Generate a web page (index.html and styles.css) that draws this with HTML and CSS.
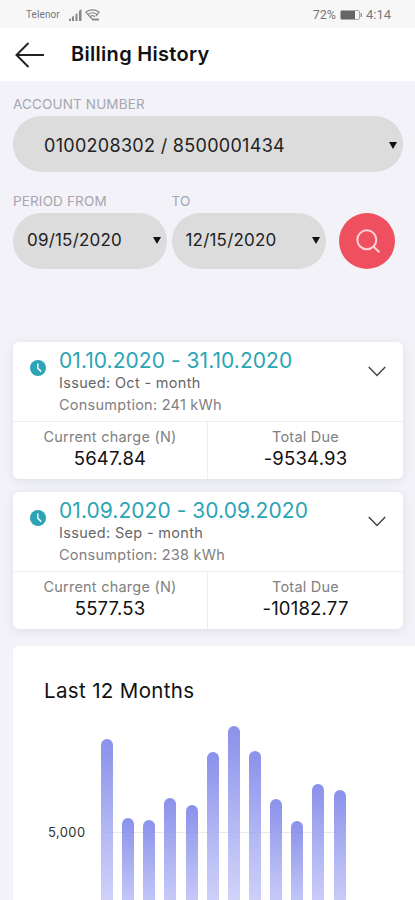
FILE: index.html
```html
<!DOCTYPE html>
<html lang="en">

<head>
    <meta charset="UTF-8">
    <meta name="viewport" content="width=device-width, initial-scale=1.0">
    <title>Billing History</title>
    <link rel="stylesheet" href="styles.css">
</head>

<body>

    <div class="status-bar">
        <span class="carrier">Telenor</span>
        <svg class="signal" width="13" height="12" viewBox="0 0 13 12">
            <path d="M0 12V10.5L2 9V12zM3 12V8L5 6.5V12zM6.500 12V5.500L8.500 4V12zM10 12V2L12.500 0V12z" fill="#888" />
        </svg>
        <svg class="wifi" width="15" height="12" viewBox="0 0 15 12" fill="none" stroke="#888" stroke-width="1.2">
            <path d="M0.500 3.200Q7.500 -1.500 14.500 3.200M3 5.500Q7.500 2 12 5.500M5 7.800Q7.500 5.500 10 7.800M0.800 3.200L7 10M14.200 3.200L11 7" />
            <path d="M7 10.500H14" stroke-width="2" />
        </svg>
        <span class="battery-level">72%</span>
        <svg class="battery" width="22" height="10" viewBox="0 0 22 10">
            <rect x="0.500" y="0.500" width="19" height="9" rx="1.500" fill="#f7f7f7" stroke="#aaa" />
            <rect x="1" y="1" width="14" height="8" fill="#666" />
            <rect x="20.500" y="3" width="1.500" height="4" fill="#999" />
        </svg>
        <span class="clock">4:14</span>
    </div>

    <header>
        <svg class="back" width="30" height="26" viewBox="0 0 30 26" fill="none" stroke="#222" stroke-width="2">
            <path d="M13.500 1L1.500 13L13.500 25" />
            <path d="M1.500 13H29" />
        </svg>
        <h1>Billing History</h1>
    </header>

    <div class="filters">
        <div class="label">ACCOUNT NUMBER</div>
        <div class="select account">
            <span>0100208302 / 8500001434</span>
            <i class="caret"></i>
        </div>
        <div class="period">
            <div class="column">
                <div class="label">PERIOD FROM</div>
                <div class="select">
                    <span>09/15/2020</span>
                    <i class="caret"></i>
                </div>
            </div>
            <div class="column">
                <div class="label">TO</div>
                <div class="select">
                    <span>12/15/2020</span>
                    <i class="caret"></i>
                </div>
            </div>
            <button class="search" aria-label="Search">
                <svg width="24" height="24" viewBox="0 0 24 24" fill="none" stroke="#ffd3d8" stroke-width="2" stroke-linecap="round">
                    <circle cx="10.800" cy="10.800" r="9.500" />
                    <path d="M17.700 17.700L22.800 22.800" />
                </svg>
            </button>
        </div>
    </div>

    <div class="bills">
        <div class="card">
            <div class="card-top">
                <svg class="time" width="16" height="16" viewBox="0 0 16 16">
                    <circle cx="8" cy="8" r="8" fill="#2ba5b5" />
                    <path d="M7.800 3.500V8.200L11.200 11.600" fill="none" stroke="#fff" stroke-width="1.500" />
                </svg>
                <div class="info">
                    <div class="dates">01.10.2020 - 31.10.2020</div>
                    <div class="issued">Issued: Oct - month</div>
                    <div class="usage">Consumption: 241 kWh</div>
                </div>
                <svg class="chevron" width="18" height="11" viewBox="0 0 18 11" fill="none" stroke="#444" stroke-width="1.500">
                    <path d="M0.800 1L9 9.500L17.200 1" />
                </svg>
            </div>
            <div class="card-bottom">
                <div class="cell">
                    <div class="cell-label">Current charge (N)</div>
                    <div class="amount">5647.84</div>
                </div>
                <div class="cell">
                    <div class="cell-label">Total Due</div>
                    <div class="amount">-9534.93</div>
                </div>
            </div>
        </div>

        <div class="card">
            <div class="card-top">
                <svg class="time" width="16" height="16" viewBox="0 0 16 16">
                    <circle cx="8" cy="8" r="8" fill="#2ba5b5" />
                    <path d="M7.800 3.500V8.200L11.200 11.600" fill="none" stroke="#fff" stroke-width="1.500" />
                </svg>
                <div class="info">
                    <div class="dates">01.09.2020 - 30.09.2020</div>
                    <div class="issued">Issued: Sep - month</div>
                    <div class="usage">Consumption: 238 kWh</div>
                </div>
                <svg class="chevron" width="18" height="11" viewBox="0 0 18 11" fill="none" stroke="#444" stroke-width="1.500">
                    <path d="M0.800 1L9 9.500L17.200 1" />
                </svg>
            </div>
            <div class="card-bottom">
                <div class="cell">
                    <div class="cell-label">Current charge (N)</div>
                    <div class="amount">5577.53</div>
                </div>
                <div class="cell">
                    <div class="cell-label">Total Due</div>
                    <div class="amount">-10182.77</div>
                </div>
            </div>
        </div>
    </div>

    <div class="chart-card">
        <h2>Last 12 Months</h2>
        <div class="chart">
            <div class="axis">5,000</div>
            <div class="plot">
                <div class="bar" style="height: 221px"></div>
                <div class="bar" style="height: 142px"></div>
                <div class="bar" style="height: 140px"></div>
                <div class="bar" style="height: 162px"></div>
                <div class="bar" style="height: 155px"></div>
                <div class="bar" style="height: 208px"></div>
                <div class="bar" style="height: 234px"></div>
                <div class="bar" style="height: 209px"></div>
                <div class="bar" style="height: 161px"></div>
                <div class="bar" style="height: 139px"></div>
                <div class="bar" style="height: 176px"></div>
                <div class="bar" style="height: 170px"></div>
            </div>
        </div>
    </div>

</body>

</html>
```

FILE: styles.css
```css
* {
    box-sizing: border-box;
}

body {
    font-family: Inter, Arial, sans-serif;
    margin: 0;
    height: 900px;
    overflow: hidden;
    background-color: #f2f2f8;
    color: #111;
}

svg {
    display: block;
    flex: none;
}

.status-bar {
    display: flex;
    align-items: center;
    height: 28px;
    padding: 2px 24px 0 26px;
    background-color: #f7f7f7;
    color: #777;
    font-family: Roboto, Arial, sans-serif;
    font-size: 13px;
    line-height: 16px;
}

.carrier {
    width: 43px;
    font-size: 10px;
    letter-spacing: 0.1px;
}

.signal {
    margin-right: 3px;
}

.battery-level {
    margin-left: auto;
    margin-right: 4px;
    font-size: 12.5px;
}

.battery {
    margin-right: 4px;
}

header {
    display: flex;
    align-items: center;
    height: 53px;
    padding-left: 15px;
    background-color: #fff;
}

h1 {
    margin: 0 0 2px 26px;
    font-size: 20px;
    font-weight: 600;
    letter-spacing: 0.3px;
    line-height: 26px;
}

.filters {
    height: 261px;
    padding: 15px 12px 0 13px;
}

.label {
    height: 20px;
    color: #a6a6ae;
    font-size: 13.5px;
    letter-spacing: 0.15px;
    line-height: 17px;
    white-space: nowrap;
}

.select {
    display: flex;
    align-items: center;
    justify-content: space-between;
    height: 56px;
    padding: 0 6px 2px 14px;
    border-radius: 28px;
    background-color: #dcdcdc;
    color: #222;
    font-size: 17px;
    letter-spacing: 0.2px;
}

.account {
    padding: 2px 6px 0 31px;
    font-size: 18px;
    letter-spacing: 0.3px;
}

.caret {
    border-left: 4px solid transparent;
    border-right: 4px solid transparent;
    border-top: 7px solid #111;
}

.period {
    display: flex;
    align-items: flex-end;
    margin-top: 21px;
}

.column {
    width: 154px;
    margin-right: 4.5px;
}

.search {
    display: flex;
    align-items: center;
    justify-content: center;
    width: 56px;
    height: 56px;
    margin-left: 9px;
    padding: 0 0 0 2px;
    border: none;
    border-radius: 50%;
    background-color: #ee5060;
}

.bills {
    display: flex;
    flex-direction: column;
    gap: 13px;
    padding: 0 12px 0 13px;
}

.card {
    height: 137px;
    border-radius: 6px;
    background-color: #fff;
    box-shadow: 0 2px 8px rgba(60, 60, 110, 0.1);
}

.card-top {
    display: flex;
    height: 80px;
    padding: 5px 17px 0;
    border-bottom: 1px solid #eee;
}

.time {
    margin-top: 13px;
}

.info {
    flex: 1;
    margin-left: 13px;
    white-space: nowrap;
}

.dates {
    color: #2ba5b5;
    font-size: 21px;
    letter-spacing: 0.05px;
    line-height: 27px;
}

.issued {
    color: #666;
    font-size: 14.5px;
    letter-spacing: 0.32px;
    line-height: 18px;
}

.usage {
    color: #808080;
    font-size: 14.5px;
    letter-spacing: 0.25px;
    line-height: 26px;
}

.chevron {
    margin-top: 19px;
}

.card-bottom {
    display: grid;
    grid-template-columns: 1fr 1fr;
    height: 57px;
    text-align: center;
}

.cell {
    padding-top: 5px;
}

.cell:first-child {
    border-right: 1px solid #eee;
}

.cell-label {
    color: #808080;
    font-size: 14.5px;
    letter-spacing: 0.23px;
    line-height: 20px;
}

.amount {
    font-size: 18.5px;
    letter-spacing: 0.2px;
    line-height: 23px;
}

.chart-card {
    height: 254px;
    margin: 17px 0 0 13px;
    overflow: hidden;
    border-top-left-radius: 5px;
    background-color: #fff;
}

h2 {
    margin: 0;
    padding: 31px 0 0 31px;
    font-size: 20.5px;
    font-weight: 400;
    letter-spacing: 0.35px;
    line-height: 28px;
}

.chart {
    display: flex;
    margin-top: 21px;
}

.axis {
    width: 88px;
    padding: 96px 0 0 35px;
    color: #333;
    font-size: 13px;
    letter-spacing: 0.4px;
    line-height: 20px;
}

.plot {
    display: flex;
    align-items: flex-end;
    gap: 9.150px;
    height: 234px;
    background: linear-gradient(#e8e8ee, #e8e8ee) 0 106px / 100% 1px no-repeat;
}

.bar {
    width: 12px;
    border-radius: 6px 6px 0 0;
    background: linear-gradient(rgba(125, 133, 232, 0.9), rgba(165, 170, 242, 0.8) 45%, rgba(225, 225, 252, 0.8));
}
```
